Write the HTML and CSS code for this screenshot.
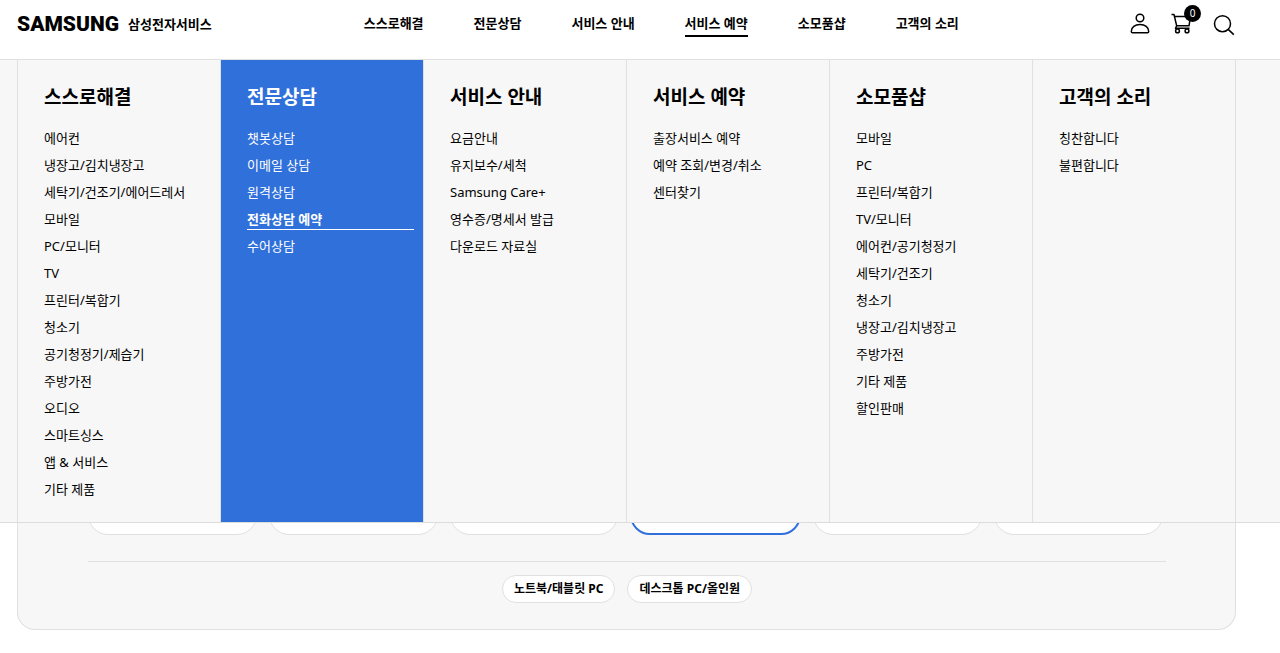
FILE: index.html
```html
<!DOCTYPE html>
<html lang="ko">
<head>
  <meta charset="UTF-8">
  <meta name="viewport" content="width=device-width, initial-scale=1">
  <title>삼성전자서비스</title>
  <link rel="stylesheet" href="styles.css">
</head>
<body>
  <header class="header">
    <a href="#" class="brand">
      <span class="brand-logo">SAMSUNG</span>
      <span class="brand-name">삼성전자서비스</span>
    </a>
    <nav class="gnb">
      <a href="#">스스로해결</a>
      <a href="#">전문상담</a>
      <a href="#">서비스 안내</a>
      <a href="#" class="current">서비스 예약</a>
      <a href="#">소모품샵</a>
      <a href="#">고객의 소리</a>
    </nav>
    <div class="utils">
      <button type="button" class="util" aria-label="로그인">
        <svg width="22" height="22" viewBox="0 0 22 22">
          <circle cx="11" cy="6" r="3.8"/>
          <path d="M3.600 20.700h14.800q1.300 0 1.300-1.300C19.700 15 16 12.600 11 12.600S2.300 15 2.300 19.400q0 1.300 1.300 1.300z"/>
        </svg>
      </button>
      <button type="button" class="util" aria-label="장바구니">
        <svg width="22" height="22" viewBox="0 0 22 22">
          <path d="M0.500 2.500h2.500l2.700 11.300H18L19.500 4.500H3.500M5.700 13.800 4.500 16.300H18.500"/>
          <circle cx="6.500" cy="18.900" r="1.900"/>
          <circle cx="16" cy="18.900" r="1.900"/>
        </svg>
        <span class="badge">0</span>
      </button>
      <button type="button" class="util" aria-label="검색">
        <svg width="22" height="22" viewBox="0 0 22 22">
          <circle cx="9.500" cy="11.700" r="8"/>
          <path d="M15.200 17.400l5.600 5.200"/>
        </svg>
      </button>
    </div>
    <div class="mega">
      <section class="col">
        <h2>스스로해결</h2>
        <ul>
          <li><a href="#">에어컨</a></li>
          <li><a href="#">냉장고/김치냉장고</a></li>
          <li><a href="#">세탁기/건조기/에어드레서</a></li>
          <li><a href="#">모바일</a></li>
          <li><a href="#">PC/모니터</a></li>
          <li><a href="#">TV</a></li>
          <li><a href="#">프린터/복합기</a></li>
          <li><a href="#">청소기</a></li>
          <li><a href="#">공기청정기/제습기</a></li>
          <li><a href="#">주방가전</a></li>
          <li><a href="#">오디오</a></li>
          <li><a href="#">스마트싱스</a></li>
          <li><a href="#">앱 &amp; 서비스</a></li>
          <li><a href="#">기타 제품</a></li>
        </ul>
      </section>
      <section class="col active">
        <h2>전문상담</h2>
        <ul>
          <li><a href="#">챗봇상담</a></li>
          <li><a href="#">이메일 상담</a></li>
          <li><a href="#">원격상담</a></li>
          <li><a href="#" class="on">전화상담 예약</a></li>
          <li><a href="#">수어상담</a></li>
        </ul>
      </section>
      <section class="col">
        <h2>서비스 안내</h2>
        <ul>
          <li><a href="#">요금안내</a></li>
          <li><a href="#">유지보수/세척</a></li>
          <li><a href="#">Samsung Care+</a></li>
          <li><a href="#">영수증/명세서 발급</a></li>
          <li><a href="#">다운로드 자료실</a></li>
        </ul>
      </section>
      <section class="col">
        <h2>서비스 예약</h2>
        <ul>
          <li><a href="#">출장서비스 예약</a></li>
          <li><a href="#">예약 조회/변경/취소</a></li>
          <li><a href="#">센터찾기</a></li>
        </ul>
      </section>
      <section class="col">
        <h2>소모품샵</h2>
        <ul>
          <li><a href="#">모바일</a></li>
          <li><a href="#">PC</a></li>
          <li><a href="#">프린터/복합기</a></li>
          <li><a href="#">TV/모니터</a></li>
          <li><a href="#">에어컨/공기청정기</a></li>
          <li><a href="#">세탁기/건조기</a></li>
          <li><a href="#">청소기</a></li>
          <li><a href="#">냉장고/김치냉장고</a></li>
          <li><a href="#">주방가전</a></li>
          <li><a href="#">기타 제품</a></li>
          <li><a href="#">할인판매</a></li>
        </ul>
      </section>
      <section class="col">
        <h2>고객의 소리</h2>
        <ul>
          <li><a href="#">칭찬합니다</a></li>
          <li><a href="#">불편합니다</a></li>
        </ul>
      </section>
    </div>
  </header>

  <main class="content">
    <div class="panel">
      <div class="cards">
        <div class="card"></div>
        <div class="card"></div>
        <div class="card"></div>
        <div class="card selected"></div>
        <div class="card"></div>
        <div class="card"></div>
      </div>
      <div class="chips">
        <button type="button" class="chip">노트북/태블릿 PC</button>
        <button type="button" class="chip">데스크톱 PC/올인원</button>
      </div>
    </div>
  </main>
</body>
</html>
```
FILE: styles.css
```css
* { box-sizing: border-box; }
body { margin: 0; background: #fff; color: #000; font-family: "Noto Sans", "Noto Sans CJK KR", sans-serif; font-size: 13px; }
a { color: inherit; text-decoration: none; }
ul { list-style: none; margin: 0; padding: 0; }
button { font-family: inherit; color: inherit; cursor: pointer; }

/* header */
.header { position: relative; z-index: 10; display: flex; align-items: flex-start; height: 59px; padding: 12px 45px 0 17px; background: #fff; }
.brand { display: flex; align-items: center; gap: 9px; height: 24px; margin-right: 152px; white-space: nowrap; }
.brand-logo { font-family: Roboto, sans-serif; font-size: 21px; font-weight: 900; line-height: 24px; }
.brand-name { font-size: 13px; font-weight: 700; line-height: 24px; }
.gnb { display: flex; gap: 50px; font-weight: 700; white-space: nowrap; }
.gnb a { height: 25px; line-height: 22px; }
.gnb .current { border-bottom: 2px solid #000; }
.utils { display: flex; gap: 20px; margin-left: auto; }
.util { position: relative; width: 22px; height: 22px; padding: 0; border: 0; background: none; }
.util svg { display: block; overflow: visible; fill: none; stroke: #000; stroke-width: 1.5; stroke-linejoin: round; }
.badge { position: absolute; top: -7px; right: -8px; width: 17px; height: 17px; border-radius: 50%; background: #000; color: #fff; font-size: 10px; line-height: 17px; text-align: center; }

/* mega menu */
.mega { position: absolute; top: 100%; left: 0; right: 0; display: flex; padding: 0 44px 0 17px; background: #f7f7f7; border-top: 1px solid #e0e0e0; border-bottom: 1px solid #dcdcdc; }
.col { flex: 1; padding: 23px 9px 19px 26px; border-left: 1px solid #e0e0e0; white-space: nowrap; }
.col:last-child { border-right: 1px solid #e0e0e0; }
.col h2 { margin: 0 0 14px; font-size: 19px; font-weight: 700; line-height: 28px; }
.col li { height: 27px; line-height: 27px; }
.col a { display: block; }
.col.active { background: #2f70da; color: #fff; }
.col .on { height: 24px; font-weight: 700; border-bottom: 1px solid #fff; }

/* product panel behind the menu */
.content { padding: 0 44px 0 17px; }
.panel { padding: 340px 69px 26px 70px; background: #f7f7f7; border: 1px solid #e0e0e0; border-top: 0; border-radius: 0 0 18px 18px; }
.cards { display: flex; gap: 12px; padding: 0 3px 26px 0; border-bottom: 1px solid #e0e0e0; }
.card { flex: 1; height: 136px; background: #fff; border: 1px solid #e0e0e0; border-radius: 20px; }
.card.selected { border: 2px solid #2f70da; }
.chips { display: flex; justify-content: center; gap: 12px; padding-top: 13px; }
.chip { height: 28px; padding: 0 11px; border: 1px solid #e0e0e0; border-radius: 14px; background: #fff; font-size: 12px; font-weight: 700; line-height: 26px; }
```
